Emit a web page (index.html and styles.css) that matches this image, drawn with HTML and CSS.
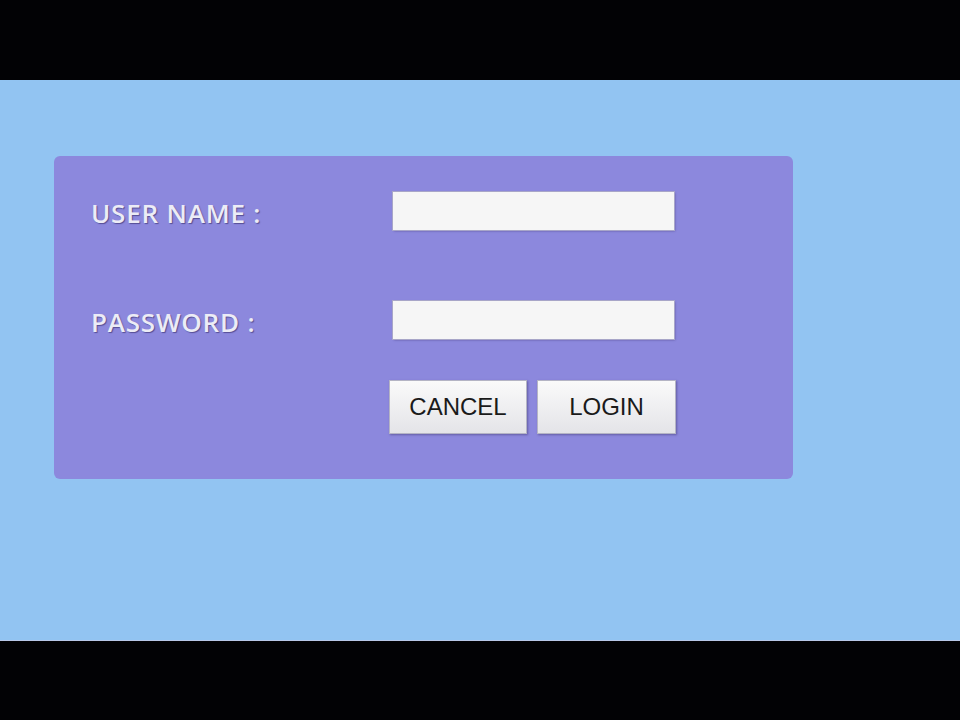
FILE: index.html
```html
<!DOCTYPE html>
<html>
<head>
<meta charset="utf-8">
<link rel="stylesheet" href="styles.css">
</head>
<body>
<div class="bar"></div>
<main class="stage">
  <form class="card">
    <div class="row">
      <label class="label">USER NAME :</label>
      <input class="field" type="text">
    </div>
    <div class="row">
      <label class="label">PASSWORD :</label>
      <input class="field" type="password">
    </div>
    <div class="actions">
      <button type="button" class="btn">CANCEL</button>
      <button type="button" class="btn">LOGIN</button>
    </div>
  </form>
</main>
<div class="bar bottom"></div>
</body>
</html>
```
FILE: styles.css
```css
html, body {
  margin: 0;
  padding: 0;
  background: #000;
}
.bar {
  height: 80px;
  background: #020205;
}
.stage {
  height: 560px;
  background: #92c4f2;
  padding: 76px 0 0 54px;
  box-sizing: border-box;
}
.bottom {
  border-top: 1px solid #b8c8e8;
  height: 79px;
}
.card {
  width: 739px;
  height: 323px;
  box-sizing: border-box;
  background: #8c88dd;
  border-radius: 6px;
  padding: 36px 0 0 37px;
  display: flex;
  flex-direction: column;
}
.row {
  display: flex;
  align-items: center;
  height: 38px;
  margin-bottom: 71px;
}
.row:nth-child(2) {
  margin-bottom: 41px;
}
.label {
  width: 302px;
  font-family: "Open Sans", "Noto Sans", sans-serif;
  font-size: 26px;
  font-weight: 600;
  letter-spacing: 0.8px;
  color: #ececf6;
  text-shadow: 1px 1px 1px rgba(40, 30, 90, 0.55);
  margin-top: 3px;
}
.field {
  width: 281px;
  height: 38px;
  box-sizing: border-box;
  margin: 0;
  border: none;
  background: #f6f6f6;
  box-shadow: 0 0 0 1px #a8a6c8, 1px 1px 2px rgba(60, 50, 110, 0.6);
}
.actions {
  display: flex;
  gap: 10px;
  padding-left: 298px;
}
.btn {
  width: 138px;
  height: 54px;
  margin: 0;
  border: 1px solid #b4b4c4;
  background: linear-gradient(#fafafa, #e4e4e8);
  font-family: "Liberation Sans", Arial, sans-serif;
  font-size: 24px;
  color: #1a1a1a;
  box-shadow: 1px 1px 2px rgba(60, 50, 110, 0.5);
  padding: 0;
}
.btn + .btn {
  width: 139px;
}
```
